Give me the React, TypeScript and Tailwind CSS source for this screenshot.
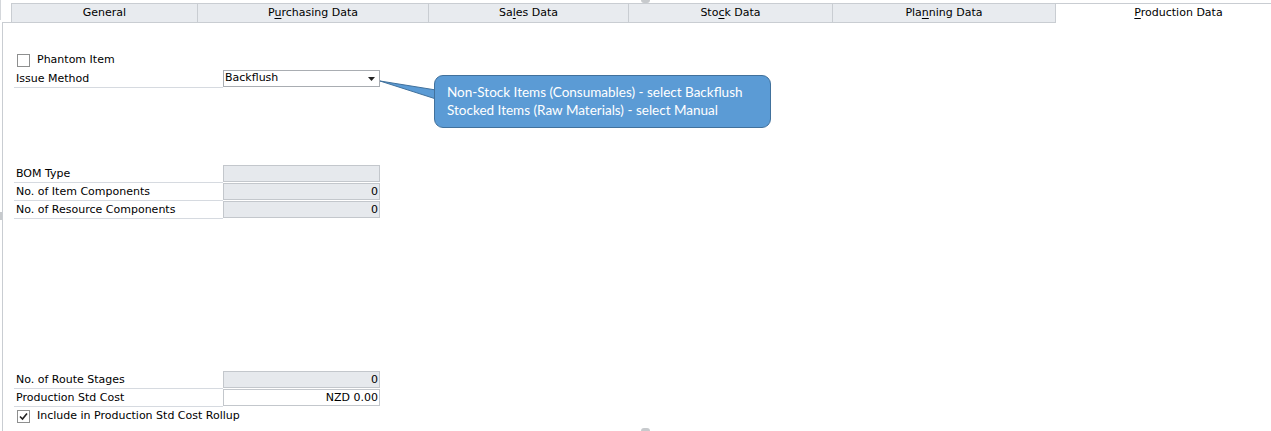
import React from 'react';

const Tab: React.FC<{ label: React.ReactNode; width: string; active?: boolean }> = ({ label, width, active }) => (
  <div
    className={`${width} h-full flex items-center justify-center border-l border-[#c9cdd2] ${
      active ? 'bg-white pl-[30px]' : 'bg-[#e8ebef] border-b'
    }`}
  >
    <span>{label}</span>
  </div>
);

const U: React.FC<{ children: React.ReactNode }> = ({ children }) => <span className="underline underline-offset-2">{children}</span>;

const FieldRow: React.FC<{ label: string; value?: string; readOnly?: boolean }> = ({ label, value, readOnly }) => (
  <div className="flex h-[18px]">
    <div className="w-[209px] border-b border-[#d6dae0] pl-[2px] flex items-center leading-none">{label}</div>
    <div
      className={`w-[157px] h-[17px] border border-[#c3c7cc] text-right pr-[1px] leading-[15px] ${
        readOnly ? 'bg-[#e6e9ed]' : 'bg-white'
      }`}
    >
      {value}
    </div>
  </div>
);

const Check: React.FC<{ checked?: boolean }> = ({ checked }) => (
  <div className="w-[13px] h-[13px] border border-[#8e8f8f] bg-white flex items-center justify-center">
    {checked && (
      <svg width="9" height="9" viewBox="0 0 9 9">
        <path d="M1 4.5 L3.5 7 L8 1.5" stroke="#222" strokeWidth="1.6" fill="none" />
      </svg>
    )}
  </div>
);

export default function App() {
  return (
    <div className="relative w-[1271px] h-[431px] overflow-hidden bg-white text-[11px] text-black font-['DejaVu_Sans',sans-serif]">
      {/* tab strip */}
      <div className="flex h-[20px] mt-[3px] ml-[11px] border-t border-[#c9cdd2]">
        <Tab width="w-[186px]" label="General" />
        <Tab width="w-[231px]" label={<>P<U>u</U>rchasing Data</>} />
        <Tab width="w-[200px]" label={<>Sa<U>l</U>es Data</>} />
        <Tab width="w-[204px]" label={<>Sto<U>c</U>k Data</>} />
        <Tab width="w-[223px]" label={<>Pla<U>n</U>ning Data</>} />
        <Tab width="flex-1" label={<><U>P</U>roduction Data</>} active />
      </div>

      {/* panel frame and splitter handles */}
      <div className="absolute left-[2px] top-[22px] bottom-0 w-[9px] border-l border-t border-[#c9cdd2]" />
      <div className="absolute left-0 top-0 h-[20px] w-px bg-[#d4d7db]" />
      <div className="absolute left-[641px] top-0 w-[9px] h-[3px] rounded-b-sm bg-[#c7cacd]" />
      <div className="absolute left-[641px] bottom-0 w-[9px] h-[3px] rounded-t-sm bg-[#c7cacd]" />
      <div className="absolute left-0 top-[212px] w-[2px] h-[8px] bg-[#c7cacd]" />

      <div className="pl-[14px] pt-[29px]">
        <div className="flex items-center gap-[7px] h-[17px] pl-[3px]">
          <Check />
          <span>Phantom Item</span>
        </div>
        <div className="flex h-[18px] mt-[1px]">
          <div className="w-[209px] border-b border-[#d6dae0] pl-[2px] flex items-center leading-none">Issue Method</div>
          <div className="w-[157px] h-[17px] border border-[#a9adb2] bg-white flex items-center justify-between pl-[1px] pr-[4px]">
            <span>Backflush</span>
            <svg width="7" height="4" viewBox="0 0 7 4">
              <path d="M0 0 H7 L3.5 4 Z" fill="#222" />
            </svg>
          </div>
        </div>

        <div className="mt-[77px] flex flex-col">
          <FieldRow label="BOM Type" readOnly />
          <FieldRow label="No. of Item Components" value="0" readOnly />
          <FieldRow label="No. of Resource Components" value="0" readOnly />
        </div>

        <div className="mt-[152px] flex flex-col">
          <FieldRow label="No. of Route Stages" value="0" readOnly />
          <FieldRow label="Production Std Cost" value="NZD 0.00" />
          <div className="flex items-center gap-[7px] h-[17px] pl-[3px] mt-[1px]">
            <Check checked />
            <span>Include in Production Std Cost Rollup</span>
          </div>
        </div>
      </div>

      {/* callout */}
      <svg className="absolute left-[378px] top-[78px]" width="60" height="24" viewBox="0 0 60 24">
        <path d="M2 3 L58 12 L58 21 Z" fill="#5b9bd5" stroke="#41719c" strokeWidth="1" />
      </svg>
      <div className="absolute left-[434px] top-[75px] w-[337px] h-[53px] rounded-[9px] bg-[#5b9bd5] border border-[#41719c] text-white text-[13.5px] leading-[18px] pl-[12px] pt-[7px] font-['Lato',sans-serif]">
        <div>Non-Stock Items (Consumables) - select Backflush</div>
        <div>Stocked Items (Raw Materials) - select Manual</div>
      </div>
    </div>
  );
}
